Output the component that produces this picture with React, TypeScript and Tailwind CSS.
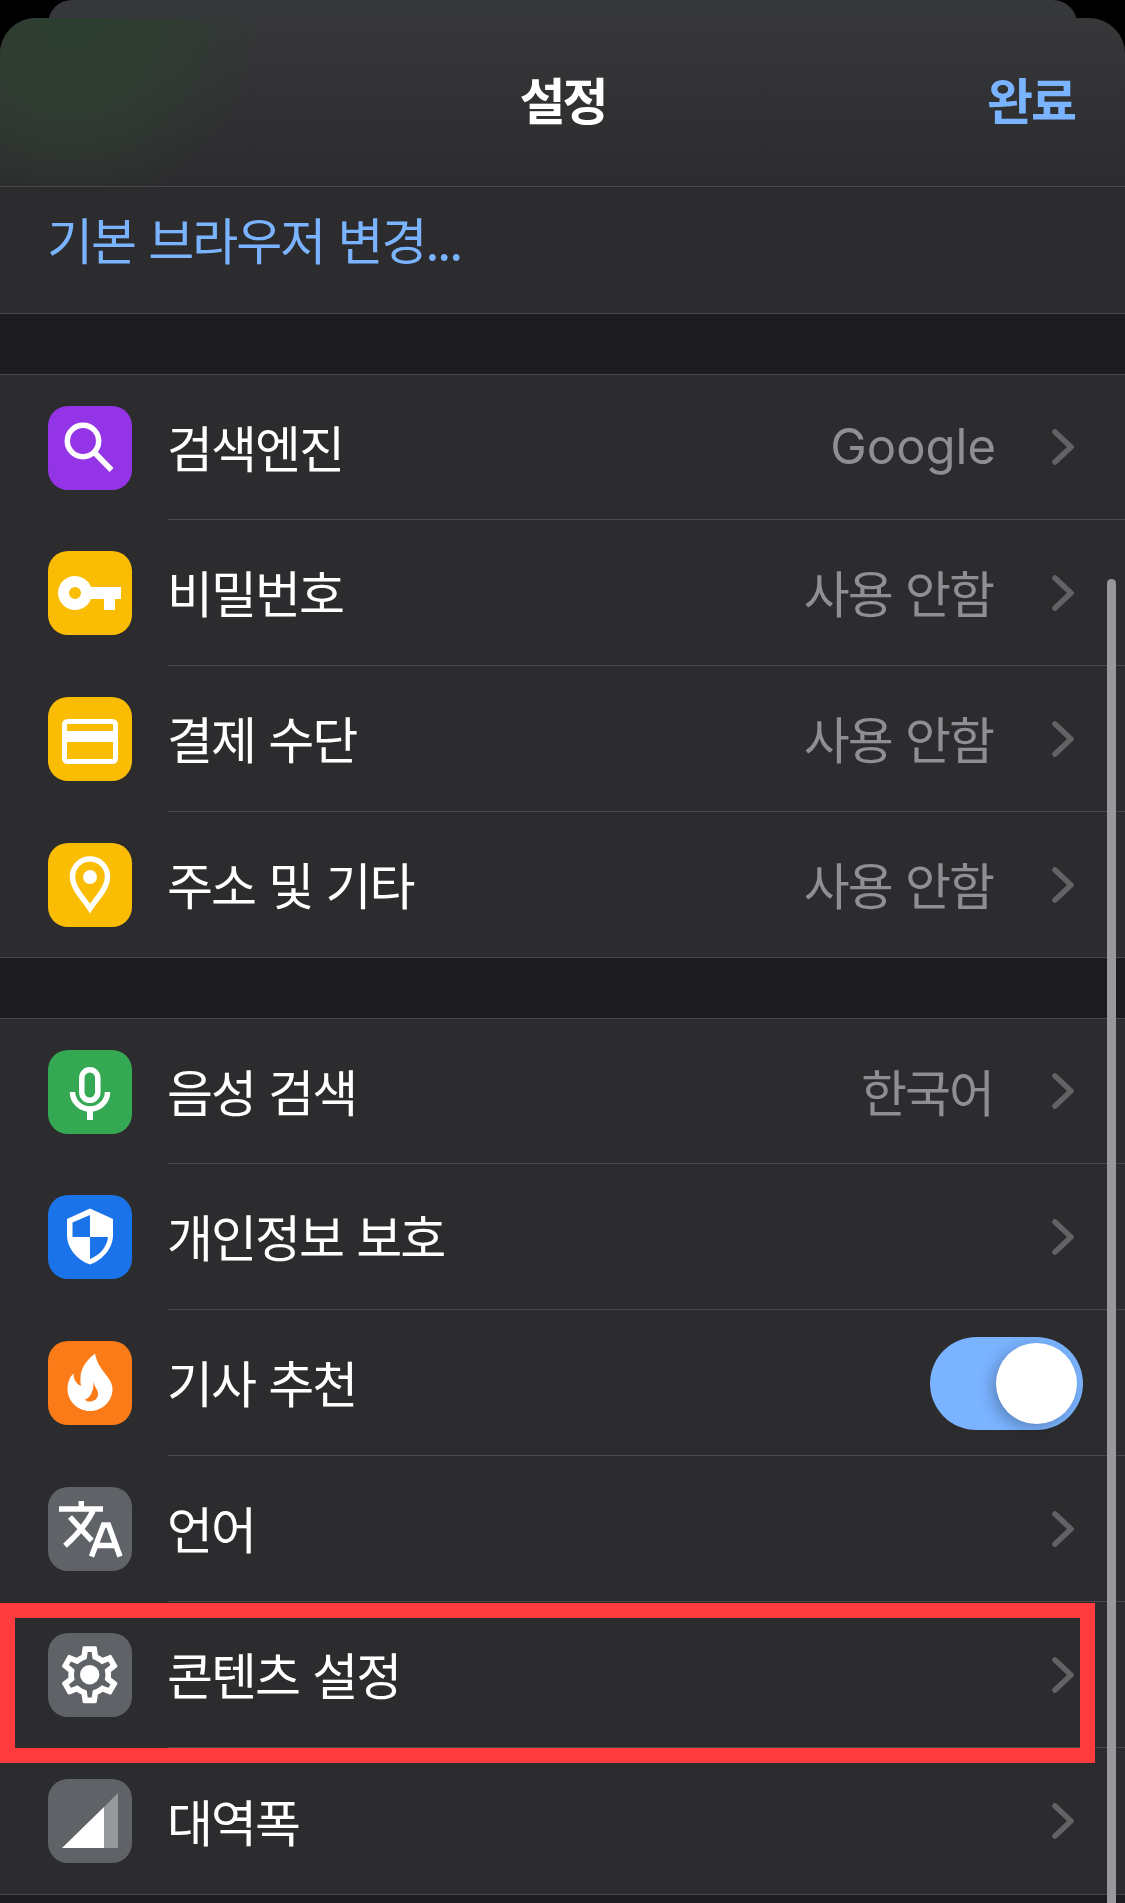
import React from 'react';

const font = { fontFamily: '"Noto Sans CJK KR", "Noto Sans", sans-serif' };

const Chevron = () => (
  <svg viewBox="0 0 24 38" width={24} height={38} fill="none" className="shrink-0">
    <path d="M4 4 L20 19 L4 34" stroke="#636366" strokeWidth="5.5" strokeLinecap="round" strokeLinejoin="round" />
  </svg>
);

const Tile: React.FC<{ color: string; children: React.ReactNode }> = ({ color, children }) => (
  <div className={`w-[84px] h-[84px] rounded-[20px] shrink-0 ${color}`}>
    <svg viewBox="0 0 84 84" width={84} height={84} fill="none">
      {children}
    </svg>
  </div>
);

const SearchIcon = () => (
  <Tile color="bg-[#9334e6]">
    <circle cx="35" cy="35" r="15.7" stroke="#fff" strokeWidth="5.5" />
    <path d="M46 46 L63.5 64" stroke="#fff" strokeWidth="5.5" />
  </Tile>
);

const KeyIcon = () => (
  <Tile color="bg-[#fbbc04]">
    <path
      fillRule="evenodd"
      fill="#fff"
      d="M27 25a17 17 0 0 1 16 11h30v12h-6v11h-11v-11h-13a17 17 0 1 1-16-23zm0 11a6 6 0 1 0 0 12a6 6 0 0 0 0-12z"
    />
  </Tile>
);

const CardIcon = () => (
  <Tile color="bg-[#fbbc04]">
    <rect x="16.5" y="24.5" width="51" height="40" rx="3" stroke="#fff" strokeWidth="5" />
    <rect x="16" y="34" width="52" height="11" fill="#fff" />
  </Tile>
);

const PinIcon = () => (
  <Tile color="bg-[#fbbc04]">
    <path
      d="M42 65.5 C35 55 24.5 45 24.5 33.5 a17.5 17.5 0 0 1 35 0 C59.5 45 49 55 42 65.5z"
      stroke="#fff"
      strokeWidth="5.5"
    />
    <circle cx="42" cy="34" r="7" fill="#fff" />
  </Tile>
);

const MicIcon = () => (
  <Tile color="bg-[#34a853]">
    <rect x="33.8" y="19.8" width="16" height="30.5" rx="8" stroke="#fff" strokeWidth="5.5" />
    <path d="M24.5 42 a17.5 17 0 0 0 35 0" stroke="#fff" strokeWidth="5.5" />
    <rect x="39" y="58" width="6" height="12" fill="#fff" />
  </Tile>
);

const ShieldIcon = () => (
  <Tile color="bg-[#1a73e8]">
    <path
      fill="#fff"
      fillRule="evenodd"
      d="M42 13.5 L65 24 V40 C65 53 55 65 42 69.5 C29 65 19 53 19 40 V24 Z M42 20 L24.5 27.5 V42 H42 Z M42 42 V64 C52 60 59 52 60 42 Z"
    />
  </Tile>
);

const FlameIcon = () => (
  <Tile color="bg-[#fa7b17]">
    <path
      fill="#fff"
      fillRule="evenodd"
      d="M47 12.5 C40 18 33 26 32.5 36 C32.3 40 32.5 42 33 45 C28 43 25.5 38 25.5 32.5 C21.5 36 19.5 42 19.5 48 C19.5 60 29.5 70 42 70 C54.5 70 64.5 60 64.5 48 C64.5 36 50 30 47 12.5 Z M45.5 40 C46 46 50 48 50 53 C50 58 46 60.5 41 60.5 C39.5 60.5 38 60 37 58.5 C42 57.5 46 50 45.5 40 Z"
    />
  </Tile>
);

const TranslateIcon = () => (
  <Tile color="bg-[#5f6368]">
    <path d="M11 22 H55 M33.3 14 V22 M45 24 C38 38 29 48 17 58.7 M22 30 L43.7 53.7" stroke="#fff" strokeWidth="5.5" />
    <path d="M43.5 69.5 L55.5 38 H60.5 L72 69.5 M48 58.5 H68" stroke="#fff" strokeWidth="5.5" />
  </Tile>
);

const GearIcon = () => (
  <Tile color="bg-[#5f6368]">
    <g transform="translate(7.5 7.5) scale(2.85)">
      <path
        fill="#fff"
        d="M19.43 12.98c.04-.32.07-.64.07-.98 0-.34-.03-.66-.07-.98l2.11-1.65c.19-.15.24-.42.12-.64l-2-3.46c-.09-.16-.26-.25-.44-.25-.06 0-.12.01-.17.03l-2.49 1c-.52-.4-1.08-.73-1.69-.98l-.38-2.65C14.46 2.18 14.25 2 14 2h-4c-.25 0-.46.18-.49.42l-.38 2.65c-.61.25-1.17.59-1.69.98l-2.49-1c-.06-.02-.12-.03-.18-.03-.17 0-.34.09-.43.25l-2 3.46c-.13.22-.07.49.12.64l2.11 1.65c-.04.32-.07.65-.07.98 0 .33.03.66.07.98l-2.11 1.65c-.19.15-.24.42-.12.64l2 3.46c.09.16.26.25.44.25.06 0 .12-.01.17-.03l2.49-1c.52.4 1.08.73 1.69.98l.38 2.65c.03.24.24.42.49.42h4c.25 0 .46-.18.49-.42l.38-2.65c.61-.25 1.17-.59 1.69-.98l2.49 1c.06.02.12.03.18.03.17 0 .34-.09.43-.25l2-3.46c.12-.22.07-.49-.12-.64l-2.11-1.65zm-1.98-1.71c.04.31.05.52.05.73 0 .21-.02.43-.05.73l-.14 1.13.89.7 1.08.84-.7 1.21-1.27-.51-1.04-.42-.9.68c-.43.32-.84.56-1.25.73l-1.06.43-.16 1.13-.2 1.35h-1.4l-.19-1.35-.16-1.13-1.06-.43c-.43-.18-.83-.41-1.23-.71l-.91-.7-1.06.43-1.27.51-.7-1.21 1.08-.84.89-.7-.14-1.13c-.03-.31-.05-.54-.05-.74s.02-.43.05-.73l.14-1.13-.89-.7-1.08-.84.7-1.21 1.27.51 1.04.42.9-.68c.43-.32.84-.56 1.25-.73l1.06-.43.16-1.13.2-1.35h1.38l.19 1.35.16 1.13 1.06.43c.43.18.83.41 1.23.71l.91.7 1.06-.43 1.27-.51.7 1.21-1.07.85-.89.7.14 1.13z"
      />
      <circle cx="12" cy="12" r="3.4" fill="#fff" />
    </g>
  </Tile>
);

const SignalIcon = () => (
  <Tile color="bg-[#5f6368]">
    <path d="M14 69 L56 28 V69 Z" fill="#fff" />
    <path d="M56 28 L70 14 V69 H56 Z" fill="#96999c" />
  </Tile>
);

const Row: React.FC<{
  icon: React.ReactNode;
  label: string;
  value?: string;
  latin?: boolean;
  short?: boolean;
  last?: boolean;
  right?: React.ReactNode;
}> = ({ icon, label, value, latin, short, last, right }) => (
  <div className={`flex items-center pl-[48px] ${short ? 'h-[145px]' : 'h-[146px]'}`}>
    {icon}
    <div className={`ml-[36px] flex-1 h-full flex items-center pr-[50px] ${last ? '' : 'border-b border-[#48484a]'}`}>
      <span className="-ml-[1px] pb-[2px] text-[50px] tracking-[-2px] [word-spacing:4px] text-white flex-1">{label}</span>
      {value && latin && (
        <span className="text-[49px] mr-[55px] text-[#8e8e93]" style={{ fontFamily: 'Inter, sans-serif' }}>
          {value}
        </span>
      )}
      {value && !latin && (
        <span className="pb-[2px] text-[50px] tracking-[-2px] [word-spacing:4px] text-[#8e8e93] mr-[58px]">{value}</span>
      )}
      {right ?? <Chevron />}
    </div>
  </div>
);

const Toggle = () => (
  <div className="w-[153px] h-[93px] -mr-[8px] mt-[2px] rounded-full bg-[#7ab3ff] flex items-center justify-end pr-[6px]">
    <div className="w-[81px] h-[81px] rounded-full bg-white shadow-[-4px_4px_14px_rgba(0,0,0,0.25)]" />
  </div>
);

export default function App() {
  return (
    <div className="relative w-[1125px] h-[1903px] overflow-hidden bg-black" style={font}>
      <div className="mx-[48px] h-[40px] -mb-[22px] rounded-t-[24px] bg-[#36373b]" />
      <div className="relative h-[1885px] rounded-t-[36px] overflow-hidden bg-[#1c1c1e]">
        <div className="h-[169px] pb-[8px] flex items-center justify-center relative border-b border-[#48484a] bg-[radial-gradient(190px_at_70px_0px,#2d3f30_0%,#2f3c31_45%,transparent_100%),linear-gradient(#363739,#2c2c2e)]">
          <span className="text-[50px] font-bold tracking-[-3px] text-white">설정</span>
          <span className="absolute right-[50px] text-[50px] font-bold tracking-[-2px] text-[#7ab3ff]">완료</span>
        </div>
        <div className="h-[127px] pb-[24px] flex items-center pl-[47px] bg-[#2c2c2e] border-b border-[#48484a]">
          <span className="text-[50px] tracking-[-2px] [word-spacing:4px] text-[#7ab3ff]">기본 브라우저 변경...</span>
        </div>
        <div className="h-[61px] border-b border-[#48484a]" />
        <div className="bg-[#2c2c2e] border-b border-[#48484a]">
          <Row icon={<SearchIcon />} label="검색엔진" value="Google" latin short />
          <Row icon={<KeyIcon />} label="비밀번호" value="사용 안함" />
          <Row icon={<CardIcon />} label="결제 수단" value="사용 안함" />
          <Row icon={<PinIcon />} label="주소 및 기타" value="사용 안함" last short />
        </div>
        <div className="h-[61px] border-b border-[#48484a]" />
        <div className="bg-[#2c2c2e] border-b border-[#48484a]">
          <Row icon={<MicIcon />} label="음성 검색" value="한국어" short />
          <Row icon={<ShieldIcon />} label="개인정보 보호" />
          <Row icon={<FlameIcon />} label="기사 추천" right={<Toggle />} />
          <Row icon={<TranslateIcon />} label="언어" />
          <Row icon={<GearIcon />} label="콘텐츠 설정" />
          <Row icon={<SignalIcon />} label="대역폭" last />
        </div>
      </div>
      {/* red annotation box */}
      <div className="absolute left-0 top-[1603px] w-[1095px] h-[160px] border-[15px] border-[#ff3b3f]" />
      {/* scroll indicator */}
      <div className="absolute left-[1107px] top-[579px] w-[9px] h-[1324px] rounded-t-full bg-[#98989b]" />
    </div>
  );
}
